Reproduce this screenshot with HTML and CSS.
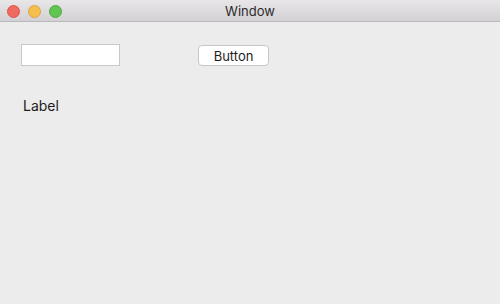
FILE: index.html
```html
<!DOCTYPE html>
<html lang="en">
<head>
    <meta charset="UTF-8">
    <title>Window</title>
    <link rel="stylesheet" href="styles.css">
</head>
<body>

<div class="window">
    <div class="titlebar">
        <div class="lights">
            <span class="light close"></span>
            <span class="light minimize"></span>
            <span class="light zoom"></span>
        </div>
        <div class="title">Window</div>
    </div>

    <div class="content">
        <div class="row">
            <input type="text" class="field">
            <button type="button" class="button">Button</button>
        </div>
        <div class="label">Label</div>
    </div>
</div>

</body>
</html>
```

FILE: styles.css
```css
html, body {
    margin: 0;
    height: 100%;
}
body {
    font-family: Inter, "Liberation Sans", sans-serif;
    background: #ececec;
    color: #1d1d1d;
}
.window {
    height: 304px;
    display: flex;
    flex-direction: column;
    background: #ececec;
}
.titlebar {
    position: relative;
    height: 22px;
    box-sizing: border-box;
    background: linear-gradient(#e8e6e8, #d3d1d3);
    border-bottom: 1px solid #b9b9b9;
    display: flex;
    align-items: center;
    justify-content: center;
}
.lights {
    position: absolute;
    left: 7px;
    top: 5px;
    display: flex;
    gap: 8px;
}
.light {
    width: 13px;
    height: 13px;
    border-radius: 50%;
    box-sizing: border-box;
}
.close {
    background: #ee6a5e;
    border: 1px solid #e0534a;
}
.minimize {
    background: #f5bf4f;
    border: 1px solid #dfa33a;
}
.zoom {
    background: #61c554;
    border: 1px solid #4daa3f;
}
.title {
    font-size: 13px;
    color: #2b2b2b;
    margin-top: 1px;
}
.content {
    padding: 22px 0 0 21px;
}
.row {
    display: flex;
    align-items: flex-start;
}
.field {
    width: 99px;
    height: 22px;
    box-sizing: border-box;
    margin: 0;
    border: 1px solid #c8c8c8;
    background: #fff;
    outline: none;
}
.button {
    margin: 1px 0 0 78px;
    width: 71px;
    height: 21px;
    box-sizing: border-box;
    background: #fff;
    border: 1px solid #c6c6c6;
    border-radius: 4px;
    font-family: inherit;
    font-size: 13px;
    color: #1d1d1d;
    padding: 0;
}
.label {
    margin: 31px 0 0 2px;
    font-size: 14px;
}
```
